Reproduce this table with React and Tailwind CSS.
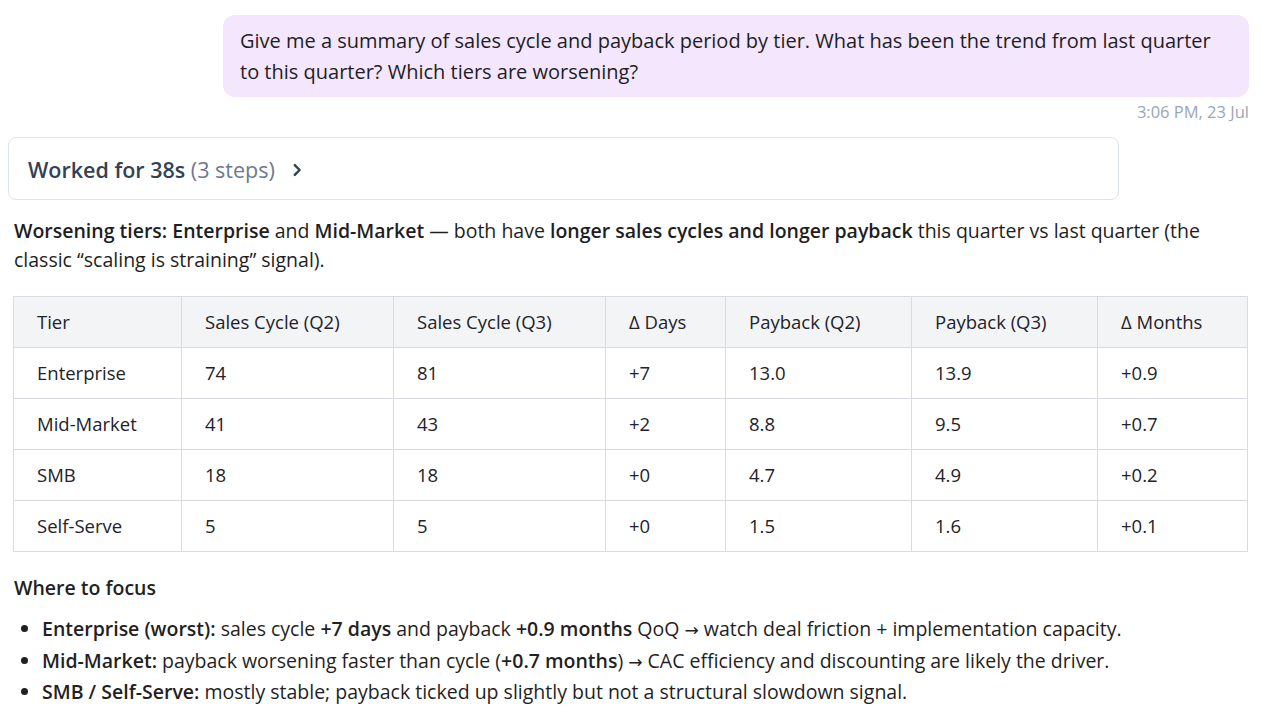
import React from "react";

const rows = [
  ["Enterprise", "74", "81", "+7", "13.0", "13.9", "+0.9"],
  ["Mid-Market", "41", "43", "+2", "8.8", "9.5", "+0.7"],
  ["SMB", "18", "18", "+0", "4.7", "4.9", "+0.2"],
  ["Self-Serve", "5", "5", "+0", "1.5", "1.6", "+0.1"],
];

const headers = [
  "Tier",
  "Sales Cycle (Q2)",
  "Sales Cycle (Q3)",
  "Δ Days",
  "Payback (Q2)",
  "Payback (Q3)",
  "Δ Months",
];

const colWidths = ["w-[168px]", "w-[212px]", "w-[212px]", "w-[120px]", "w-[186px]", "w-[186px]", "w-[150px]"];

function ChevronRight() {
  return (
    <svg width="18" height="18" viewBox="0 0 24 24" fill="none" stroke="#334155" strokeWidth="3.2" strokeLinecap="round" strokeLinejoin="round">
      <path d="M9 5.5l6.5 6.5-6.5 6.5" />
    </svg>
  );
}

const Arrow = () => <span className="font-['DejaVu_Sans',sans-serif] text-[17px] leading-none">→</span>;

export default function App() {
  return (
    <div className="w-[1268px] h-[717px] overflow-hidden bg-white text-[#1f1f24] font-['Open_Sans',sans-serif]">
      <div className="flex flex-col items-end pt-[15px] pr-[19px]">
        <div className="w-[1026px] rounded-[12px] bg-[#f4e6fc] px-[17px] pt-[10px] pb-[10px] text-[20px] leading-[31px] text-[#1e1e26]">
          Give me a summary of sales cycle and payback period by tier. What has been the trend from last quarter to this quarter? Which tiers are worsening?
        </div>
        <div className="mt-[4px] text-[16.5px] leading-[22px] text-[#9aa6b8]">3:06 PM, 23 Jul</div>
      </div>

      <div className="px-[8px] mt-[14px]">
        <div className="w-[1111px] h-[63px] flex items-center gap-[13px] border border-[#dde3ea] rounded-[8px] px-[19px] pt-[3px]">
          <span className="text-[21.5px] font-semibold text-[#334155]">
            Worked for 38s <span className="font-normal text-[#6b7a90]">(3 steps)</span>
          </span>
          <ChevronRight />
        </div>
      </div>

      <div className="px-[14px] pt-[16px]">
        <p className="text-[19.5px] leading-[29px] text-[#1e1e22]">
          <b className="font-semibold">Worsening tiers: Enterprise</b> and <b className="font-semibold">Mid-Market</b> — both have{" "}
          <b className="font-semibold">longer sales cycles and longer payback</b> this quarter vs last quarter (the classic “scaling is straining” signal).
        </p>

        <table className="mt-[22px] -ml-px border-collapse text-[18.5px] text-[#22222a]">
          <thead>
            <tr className="bg-[#f3f4f6]">
              {headers.map((h, i) => (
                <th key={h} className={`${colWidths[i]} h-[51px] border border-[#d8dbe2] pl-[23px] text-left font-normal`}>
                  {h}
                </th>
              ))}
            </tr>
          </thead>
          <tbody>
            {rows.map((r) => (
              <tr key={r[0]}>
                {r.map((c, i) => (
                  <td key={i} className="h-[51px] border border-[#d8dbe2] pl-[23px]">
                    {c}
                  </td>
                ))}
              </tr>
            ))}
          </tbody>
        </table>

        <div className="mt-[21px] text-[19.5px] leading-[30px] font-semibold">Where to focus</div>
        <ul className="mt-[10px] list-disc pl-[28px] text-[19.5px] leading-[31.5px]">
          <li>
            <b className="font-semibold">Enterprise (worst):</b> sales cycle <b className="font-semibold">+7 days</b> and payback{" "}
            <b className="font-semibold">+0.9 months</b> QoQ <Arrow /> watch deal friction + implementation capacity.
          </li>
          <li>
            <b className="font-semibold">Mid-Market:</b> payback worsening faster than cycle (<b className="font-semibold">+0.7 months</b>) <Arrow /> CAC efficiency and discounting are likely the driver.
          </li>
          <li>
            <b className="font-semibold">SMB / Self-Serve:</b> mostly stable; payback ticked up slightly but not a structural slowdown signal.
          </li>
        </ul>
      </div>
    </div>
  );
}
